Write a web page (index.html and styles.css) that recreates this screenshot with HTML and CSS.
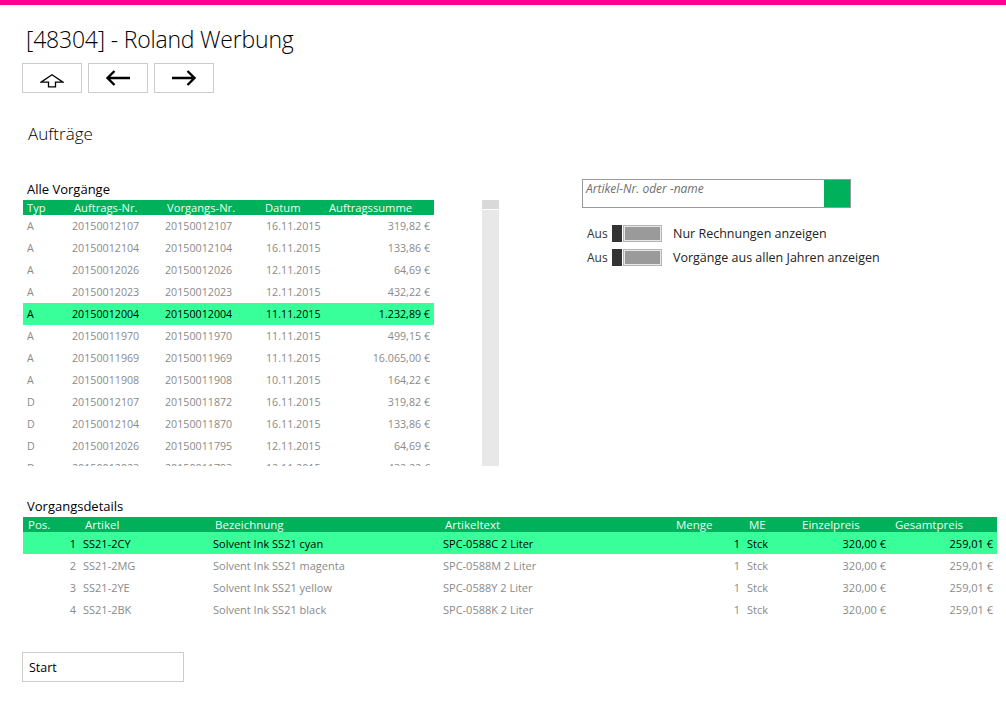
FILE: index.html
```html
<!DOCTYPE html>
<html lang="de">
<head>
<meta charset="utf-8">
<title>[48304] - Roland Werbung</title>
<link rel="stylesheet" href="styles.css">
</head>
<body>
<div class="topbar"></div>
<main class="page">
  <h1 class="title">[48304] - Roland Werbung</h1>
  <div class="nav">
    <button class="navbtn" aria-label="Hoch">
      <svg width="24" height="14" viewBox="0 0 24 14"><path d="M12 0.8 L23 8.2 L15.5 8.2 L15.5 12.8 L8.5 12.8 L8.5 8.2 L1 8.2 Z" fill="none" stroke="#000" stroke-width="1.3" stroke-linejoin="miter"/></svg>
    </button>
    <button class="navbtn" aria-label="Zurück">
      <svg width="26" height="16" viewBox="0 0 26 16"><path d="M25 8 H2.5 M9.5 1 L2.5 8 L9.5 15" fill="none" stroke="#000" stroke-width="2.4"/></svg>
    </button>
    <button class="navbtn" aria-label="Vor">
      <svg width="26" height="16" viewBox="0 0 26 16"><path d="M1 8 H23.5 M16.5 1 L23.5 8 L16.5 15" fill="none" stroke="#000" stroke-width="2.4"/></svg>
    </button>
  </div>

  <h2 class="section">Aufträge</h2>

  <div class="middle">
    <div class="left">
      <div class="label">Alle Vorgänge</div>
      <div class="listwrap">
        <div class="list">
          <div class="row head"><span>Typ</span><span>Auftrags-Nr.</span><span>Vorgangs-Nr.</span><span>Datum</span><span>Auftragssumme</span></div>
          <div class="scroll">
            <div class="row"><span>A</span><span>20150012107</span><span>20150012107</span><span>16.11.2015</span><span class="num">319,82 €</span></div>
            <div class="row"><span>A</span><span>20150012104</span><span>20150012104</span><span>16.11.2015</span><span class="num">133,86 €</span></div>
            <div class="row"><span>A</span><span>20150012026</span><span>20150012026</span><span>12.11.2015</span><span class="num">64,69 €</span></div>
            <div class="row"><span>A</span><span>20150012023</span><span>20150012023</span><span>12.11.2015</span><span class="num">432,22 €</span></div>
            <div class="row sel"><span>A</span><span>20150012004</span><span>20150012004</span><span>11.11.2015</span><span class="num">1.232,89 €</span></div>
            <div class="row"><span>A</span><span>20150011970</span><span>20150011970</span><span>11.11.2015</span><span class="num">499,15 €</span></div>
            <div class="row"><span>A</span><span>20150011969</span><span>20150011969</span><span>11.11.2015</span><span class="num">16.065,00 €</span></div>
            <div class="row"><span>A</span><span>20150011908</span><span>20150011908</span><span>10.11.2015</span><span class="num">164,22 €</span></div>
            <div class="row"><span>D</span><span>20150012107</span><span>20150011872</span><span>16.11.2015</span><span class="num">319,82 €</span></div>
            <div class="row"><span>D</span><span>20150012104</span><span>20150011870</span><span>16.11.2015</span><span class="num">133,86 €</span></div>
            <div class="row"><span>D</span><span>20150012026</span><span>20150011795</span><span>12.11.2015</span><span class="num">64,69 €</span></div>
            <div class="row"><span>D</span><span>20150012023</span><span>20150011793</span><span>12.11.2015</span><span class="num">432,22 €</span></div>
          </div>
        </div>
        <div class="scrollbar"><div class="thumb"></div></div>
      </div>
    </div>

    <div class="right">
      <div class="search">
        <span class="placeholder">Artikel-Nr. oder -name</span>
        <span class="searchbtn"></span>
      </div>
      <div class="toggles">
        <div class="toggle"><span class="state">Aus</span><span class="switch"><span class="knob"></span><span class="fill"></span></span><span class="tlabel">Nur Rechnungen anzeigen</span></div>
        <div class="toggle"><span class="state">Aus</span><span class="switch"><span class="knob"></span><span class="fill"></span></span><span class="tlabel">Vorgänge aus allen Jahren anzeigen</span></div>
      </div>
    </div>
  </div>

  <div class="details">
    <div class="label">Vorgangsdetails</div>
    <div class="dtable">
      <div class="drow head"><span>Pos.</span><span>Artikel</span><span>Bezeichnung</span><span>Artikeltext</span><span>Menge</span><span>ME</span><span>Einzelpreis</span><span>Gesamtpreis</span></div>
      <div class="drow sel"><span class="num">1</span><span>SS21-2CY</span><span>Solvent Ink SS21 cyan</span><span>SPC-0588C 2 Liter</span><span class="num">1</span><span>Stck</span><span class="num">320,00 €</span><span class="num">259,01 €</span></div>
      <div class="drow"><span class="num">2</span><span>SS21-2MG</span><span>Solvent Ink SS21 magenta</span><span>SPC-0588M 2 Liter</span><span class="num">1</span><span>Stck</span><span class="num">320,00 €</span><span class="num">259,01 €</span></div>
      <div class="drow"><span class="num">3</span><span>SS21-2YE</span><span>Solvent Ink SS21 yellow</span><span>SPC-0588Y 2 Liter</span><span class="num">1</span><span>Stck</span><span class="num">320,00 €</span><span class="num">259,01 €</span></div>
      <div class="drow"><span class="num">4</span><span>SS21-2BK</span><span>Solvent Ink SS21 black</span><span>SPC-0588K 2 Liter</span><span class="num">1</span><span>Stck</span><span class="num">320,00 €</span><span class="num">259,01 €</span></div>
    </div>
  </div>

  <button class="startbtn">Start</button>
</main>
</body>
</html>
```

FILE: styles.css
```css
* { box-sizing: border-box; }
html, body { margin: 0; padding: 0; background: #fff; }
body {
  font-family: "Open Sans", "Noto Sans", "Liberation Sans", sans-serif;
  color: #000;
  width: 1006px;
  height: 704px;
  overflow: hidden;
}
.topbar { height: 5px; background: #ff0090; }
.page { padding: 0 0 0 22px; }

.title {
  margin: 20px 0 0 4px;
  font-size: 23px;
  font-weight: 300;
  line-height: 29px;
  color: #000;
  letter-spacing: -0.2px;
}
.nav { display: flex; gap: 6px; margin-top: 9px; }
.navbtn {
  width: 60px; height: 30px;
  border: 1px solid #cccccc;
  background: #fff;
  display: flex; align-items: center; justify-content: center;
  padding: 0;
}
.navbtn svg { display: block; }
.navbtn:first-child svg { margin-top: 5px; }

.section {
  margin: 29px 0 0 6px;
  font-size: 17px;
  font-weight: 300;
  line-height: 24px;
}

.middle { display: flex; margin-top: 29px; }
.left { width: 477px; padding-top: 6px; }
.label { font-size: 13px; line-height: 16px; padding-bottom: 3px; margin-left: 5px; color: #000; }
.listwrap { display: flex; gap: 48px; margin-left: 1px; }
.list { width: 411px; }
.row {
  display: grid;
  grid-template-columns: 45px 93px 101px 63px 109px;
  height: 22px;
  align-items: center;
  font-size: 10.7px;
  color: #8a8a8a;
}
.row span { padding-left: 4px; white-space: nowrap; }
.row span.num { text-align: right; padding-right: 4px; }
.row.head { height: 15px; background: #00b05a; color: #eafff2; font-size: 11.2px; }
.row.head span:nth-child(2), .row.head span:nth-child(3) { padding-left: 6px; }
.row.head span:nth-child(4) { padding-left: 3px; }
.row.sel { background: #38ff9a; color: #000; }
.scroll { height: 251px; overflow: hidden; }
.scrollbar { width: 17px; height: 266px; background: #e8e8e8; }
.thumb { height: 10px; background: #d9d9d9; border-bottom: 1px solid #fff; }

.right { padding-top: 4px; margin-left: 83px; }
.search {
  width: 269px; height: 29px;
  border: 1px solid #9a9a9a;
  display: flex; justify-content: space-between;
}
.placeholder {
  font-size: 12px; font-style: italic; color: #6f6f6f;
  padding: 1px 0 0 3px;
  line-height: 16px;
}
.searchbtn { width: 26px; background: #00b05a; }
.toggles { margin-top: 17px; display: flex; flex-direction: column; gap: 7px; margin-left: 5px; }
.toggle { display: flex; align-items: center; height: 17px; }
.state { font-size: 12px; color: #333; width: 25px; }
.switch { display: flex; width: 50px; height: 17px; }
.knob { width: 10px; background: #333; }
.fill { flex: 1; margin-left: 1px; background: #9a9a9a; border: 1px solid #b4b4b4; box-shadow: inset 0 0 0 1px #e6e6e6; }
.tlabel { margin-left: 11px; font-size: 12.5px; color: #222; }

.details { margin-top: 32px; }
.details .label { margin-left: 5px; }
.dtable { width: 974px; margin-left: 1px; }
.drow {
  display: grid;
  grid-template-columns: 57px 130px 230px 231px 73px 53px 93px 107px;
  height: 22px;
  align-items: center;
  font-size: 11px;
  color: #8a8a8a;
}
.drow span { padding-left: 3px; white-space: nowrap; }
.drow span.num { text-align: right; padding-right: 4px; }
.drow.head { height: 15px; background: #00b05a; color: #eafff2; font-size: 11.5px; }
.drow.head span { padding-left: 5px; }
.drow.sel { background: #38ff9a; color: #000; }

.startbtn {
  display: block;
  margin-top: 32px;
  width: 162px; height: 30px;
  border: 1px solid #cccccc;
  background: #fff;
  text-align: left;
  padding: 0 0 0 6px;
  font-family: inherit;
  font-size: 12.5px;
  color: #000;
}
```
